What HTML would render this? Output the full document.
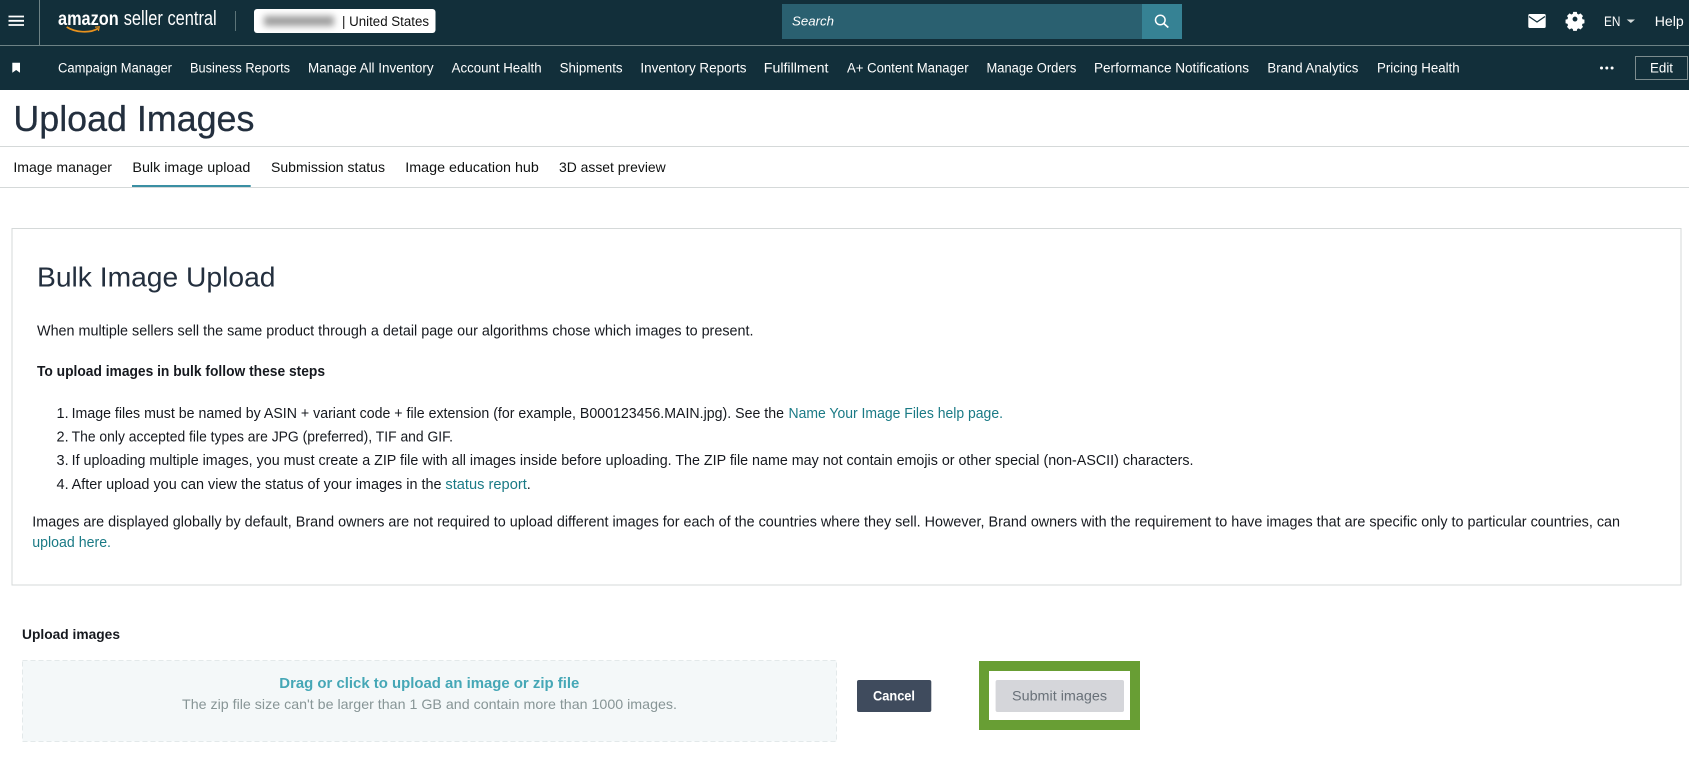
<!DOCTYPE html>
<html lang="en">
<head>
<meta charset="utf-8">
<title>Upload Images</title>
<style>
html,body{margin:0;padding:0;background:#fff;width:1689px;height:763px;overflow:hidden}
svg{display:block}
text{font-family:"Liberation Sans",sans-serif;white-space:pre}
.nav{font-size:13.5px;fill:#fff}
.tab{font-size:14px;fill:#0f1111}
.body{font-size:14.5px;fill:#16191f}
.link{font-size:14.5px;fill:#1a7a85}
</style>
</head>
<body>
<svg xmlns="http://www.w3.org/2000/svg" width="1689" height="763" viewBox="0 0 1689 763">
<defs><filter id="b" x="-30%" y="-100%" width="160%" height="300%"><feGaussianBlur stdDeviation="3.500"/></filter></defs>
<rect width="1689" height="763" fill="#fff"/>
<!-- header -->
<rect width="1689" height="90" fill="#122f3a"/>
<rect y="45" width="1689" height="1" fill="#6d8285"/>
<rect x="39" y="0" width="1" height="45" fill="#6d8285"/>
<path d="M8.500 16.500H24M8.500 20.800H24M8.500 25H24" stroke="#fff" stroke-width="1.800" fill="none"/>
<text x="58" y="25" font-size="19" font-weight="700" fill="#fff" textLength="60.700" lengthAdjust="spacingAndGlyphs">amazon</text>
<text x="123.700" y="25" font-size="20" fill="#fff" textLength="93" lengthAdjust="spacingAndGlyphs">seller central</text>
<path d="M66.700 27C75 32.500 90 33.500 98 28.500" stroke="#e8921e" stroke-width="1.700" fill="none"/>
<path d="M95 27.200L99.200 26.800L98.400 31" stroke="#e8921e" stroke-width="1.200" fill="none"/>
<rect x="235" y="11" width="1" height="20" fill="#5c7478"/>
<rect x="254" y="9" width="181.500" height="24" rx="3" fill="#fff"/>
<rect x="264" y="16" width="70" height="10" fill="#9c9c9c" filter="url(#b)"/>
<text x="342" y="26" font-size="13.500" fill="#111" textLength="87" lengthAdjust="spacingAndGlyphs">| United States</text>
<!-- search -->
<rect x="782" y="4" width="360" height="35" fill="#2a6070"/>
<rect x="1142" y="4" width="40" height="35" fill="#368294"/>
<text x="792" y="25.500" font-size="13" font-style="italic" fill="#fff" textLength="42" lengthAdjust="spacingAndGlyphs">Search</text>
<circle cx="1160.300" cy="20" r="4.800" stroke="#fff" stroke-width="1.500" fill="none"/>
<path d="M1163.800 23.500L1168.300 27.500" stroke="#fff" stroke-width="1.700" fill="none"/>
<!-- right icons -->
<rect x="1528.300" y="14" width="17.400" height="14" rx="1.500" fill="#fff"/>
<path d="M1529 16.500L1537 22L1545 16.500" stroke="#122f3a" stroke-width="1.300" fill="none"/>
<path fill="#fff" fill-rule="evenodd" d="M1573 13h4l.5 2.200 1.600.7 2-1.200 2.800 2.800-1.200 2 .7 1.600 2.100.5v4l-2.100.5-.7 1.600 1.200 2-2.800 2.800-2-1.200-1.600.7-.5 2.100h-4l-.5-2.100-1.600-.7-2 1.200-2.800-2.800 1.200-2-.7-1.600-2.100-.5v-4l2.100-.5.7-1.600-1.200-2 2.800-2.800 2 1.200 1.600-.7zM1575 18.300a2.700 2.700 0 1 0 0 5.400a2.700 2.700 0 1 0 0-5.400z" transform="translate(157.500 .2) scale(.9)"/>
<text x="1604" y="26" font-size="14" fill="#fff" textLength="16.500" lengthAdjust="spacingAndGlyphs">EN</text>
<path d="M1626.700 19.500H1635L1630.850 23z" fill="#d5dbdb"/>
<text x="1654.700" y="26" font-size="14" fill="#fff" textLength="29" lengthAdjust="spacingAndGlyphs">Help</text>
<!-- nav -->
<path d="M12.300 62.700H20V72.700L16.150 70L12.300 72.700z" fill="#fff"/>
<text class="nav" x="58" y="72.500" textLength="114" lengthAdjust="spacingAndGlyphs">Campaign Manager</text>
<text class="nav" x="190" y="72.500" textLength="100" lengthAdjust="spacingAndGlyphs">Business Reports</text>
<text class="nav" x="308" y="72.500" textLength="125.600" lengthAdjust="spacingAndGlyphs">Manage All Inventory</text>
<text class="nav" x="451.600" y="72.500" textLength="90" lengthAdjust="spacingAndGlyphs">Account Health</text>
<text class="nav" x="559.600" y="72.500" textLength="63" lengthAdjust="spacingAndGlyphs">Shipments</text>
<text class="nav" x="640.400" y="72.500" textLength="106.100" lengthAdjust="spacingAndGlyphs">Inventory Reports</text>
<text class="nav" x="763.800" y="72.500" textLength="64.600" lengthAdjust="spacingAndGlyphs">Fulfillment</text>
<text class="nav" x="847" y="72.500" textLength="121.600" lengthAdjust="spacingAndGlyphs">A+ Content Manager</text>
<text class="nav" x="986.500" y="72.500" textLength="89.800" lengthAdjust="spacingAndGlyphs">Manage Orders</text>
<text class="nav" x="1094" y="72.500" textLength="155" lengthAdjust="spacingAndGlyphs">Performance Notifications</text>
<text class="nav" x="1267.400" y="72.500" textLength="91" lengthAdjust="spacingAndGlyphs">Brand Analytics</text>
<text class="nav" x="1377" y="72.500" textLength="82.600" lengthAdjust="spacingAndGlyphs">Pricing Health</text>
<circle cx="1601.500" cy="68" r="1.500" fill="#fff"/><circle cx="1606.800" cy="68" r="1.500" fill="#fff"/><circle cx="1612.100" cy="68" r="1.500" fill="#fff"/>
<rect x="1635.500" y="56.500" width="52" height="23" fill="none" stroke="#7d8c8e"/>
<text class="nav" x="1650" y="72.500" textLength="23" lengthAdjust="spacingAndGlyphs">Edit</text>
<!-- title -->
<text x="13.400" y="131" font-size="36" fill="#232f3e" stroke="#232f3e" stroke-width=".3" textLength="241" lengthAdjust="spacingAndGlyphs">Upload Images</text>
<rect y="146" width="1689" height="1" fill="#d5d9d9"/>
<text class="tab" x="13.400" y="172" textLength="98.600" lengthAdjust="spacingAndGlyphs">Image manager</text>
<text class="tab" x="132.400" y="172" textLength="117.900" lengthAdjust="spacingAndGlyphs">Bulk image upload</text>
<text class="tab" x="271" y="172" textLength="114" lengthAdjust="spacingAndGlyphs">Submission status</text>
<text class="tab" x="405.300" y="172" textLength="133.500" lengthAdjust="spacingAndGlyphs">Image education hub</text>
<text class="tab" x="559" y="172" textLength="106.700" lengthAdjust="spacingAndGlyphs">3D asset preview</text>
<rect y="187" width="1689" height="1" fill="#d5d9d9"/>
<rect x="132" y="185" width="118.700" height="2" fill="#3a8fa3"/>
<!-- card -->
<rect x="12" y="228.500" width="1669" height="356.500" fill="#fff" stroke="#d5d9d9"/>
<text x="37" y="286.500" font-size="28" fill="#232f3e" textLength="238.500" lengthAdjust="spacingAndGlyphs">Bulk Image Upload</text>
<text class="body" x="37" y="335.700" textLength="716.500" lengthAdjust="spacingAndGlyphs">When multiple sellers sell the same product through a detail page our algorithms chose which images to present.</text>
<text class="body" x="37" y="376.200" font-weight="700" textLength="288" lengthAdjust="spacingAndGlyphs">To upload images in bulk follow these steps</text>
<text class="body" x="56.500" y="417.800">1.</text>
<text class="body" x="71.600" y="417.800" textLength="712.400" lengthAdjust="spacingAndGlyphs">Image files must be named by ASIN + variant code + file extension (for example, B000123456.MAIN.jpg). See the</text>
<text class="link" x="788.500" y="417.800" textLength="214.500" lengthAdjust="spacingAndGlyphs">Name Your Image Files help page.</text>
<text class="body" x="56.500" y="441.500">2.</text>
<text class="body" x="71.600" y="441.500" textLength="381.400" lengthAdjust="spacingAndGlyphs">The only accepted file types are JPG (preferred), TIF and GIF.</text>
<text class="body" x="56.500" y="465.200">3.</text>
<text class="body" x="71.600" y="465.200" textLength="1121.900" lengthAdjust="spacingAndGlyphs">If uploading multiple images, you must create a ZIP file with all images inside before uploading. The ZIP file name may not contain emojis or other special (non-ASCII) characters.</text>
<text class="body" x="56.500" y="489">4.</text>
<text class="body" x="71.600" y="489" textLength="370" lengthAdjust="spacingAndGlyphs">After upload you can view the status of your images in the</text>
<text class="link" x="445.400" y="489" textLength="81.400" lengthAdjust="spacingAndGlyphs">status report</text>
<text class="body" x="526.800" y="489">.</text>
<text class="body" x="32.300" y="526.500" textLength="1587.700" lengthAdjust="spacingAndGlyphs">Images are displayed globally by default, Brand owners are not required to upload different images for each of the countries where they sell. However, Brand owners with the requirement to have images that are specific only to particular countries, can</text>
<text class="link" x="32.300" y="547" textLength="78.700" lengthAdjust="spacingAndGlyphs">upload here.</text>
<!-- upload -->
<text x="22" y="639" font-size="14" font-weight="700" fill="#16191f" textLength="98" lengthAdjust="spacingAndGlyphs">Upload images</text>
<rect x="22.500" y="660.500" width="814" height="81" fill="#f4f8f9" stroke="#e3e9ea" stroke-dasharray="5 3"/>
<text x="279.300" y="688" font-size="15" font-weight="700" fill="#45a7b6" textLength="300" lengthAdjust="spacingAndGlyphs">Drag or click to upload an image or zip file</text>
<text x="182" y="709" font-size="14" fill="#879596" textLength="495" lengthAdjust="spacingAndGlyphs">The zip file size can't be larger than 1 GB and contain more than 1000 images.</text>
<rect x="857" y="680" width="74.300" height="32" rx="2" fill="#3f4b5d"/>
<text x="873" y="700.500" font-size="14" font-weight="700" fill="#fff" textLength="42" lengthAdjust="spacingAndGlyphs">Cancel</text>
<rect x="979" y="661" width="161" height="69" fill="#689e34"/>
<rect x="989" y="671" width="141" height="49" fill="#fff"/>
<rect x="995.600" y="680" width="128.400" height="32" rx="2" fill="#d5d6da"/>
<text x="1012" y="700.500" font-size="14" fill="#687078" textLength="95" lengthAdjust="spacingAndGlyphs">Submit images</text>
</svg>
</body>
</html>
